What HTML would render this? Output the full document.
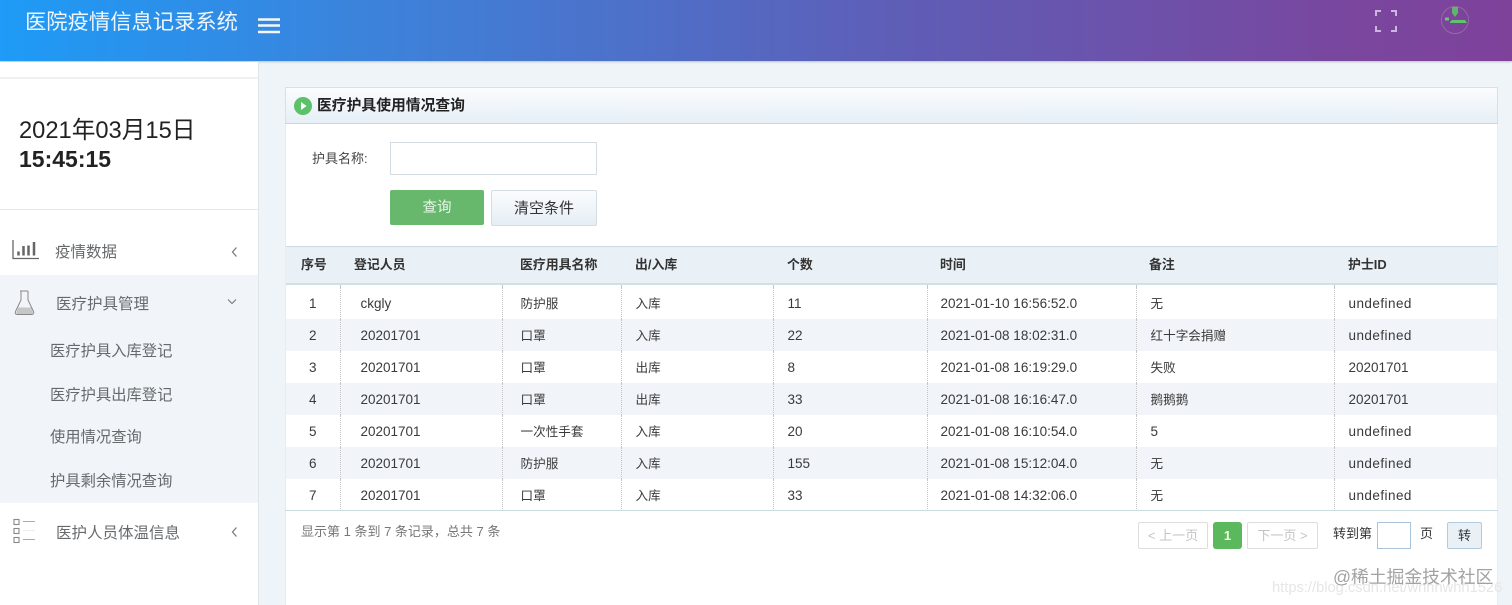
<!DOCTYPE html>
<html lang="zh-CN">
<head>
<meta charset="utf-8">
<title>医院疫情信息记录系统</title>
<style>
*{box-sizing:border-box}
html,body{margin:0;padding:0;width:1512px;height:605px;overflow:hidden;background:#eff4f8;font-family:"Liberation Sans","Noto Sans CJK SC",sans-serif;color:#333}
.a{position:absolute;white-space:nowrap}
#hd{left:0;top:0;width:1512px;height:61px;background:linear-gradient(90deg,#1e9bf6 0%,#3f80d8 27%,#5f5db6 60%,#7a469e 90%,#7e429b 100%);box-shadow:0 1px 2px rgba(0,0,0,.22)}
#sb{left:0;top:62px;width:259px;height:543px;background:#fff;border-right:1px solid #dfe5ea}
.menu{font-size:15.5px;color:#676a6c;line-height:20px}
.sub{font-size:15.3px;color:#676a6c;line-height:20px;left:50px}
th,td{padding:0;font-weight:normal}
#tb{position:absolute;left:286px;top:246px;width:1211px;border-collapse:collapse;table-layout:fixed;font-size:13.5px}
#tb th{height:37px;padding-bottom:2px;font-weight:bold;font-size:12.9px;text-align:left;background:#eaf1f6;border-top:1px solid #c9dae5;border-bottom:2px solid #d3dfe7;color:#333}
#tb td{height:32px;padding-top:1px;color:#3a3a3a;border-left:1px dotted #c4c4c4;padding-left:14px}
#tb td:first-child{border-left:none;text-align:center;padding-left:0}
#tb td:nth-child(2){padding-left:20px}
#tb td:nth-child(3){padding-left:18px}
#tb td:nth-child(6){padding-left:13px}
#tb td.u{letter-spacing:.45px}
#tb td.c{font-size:12.6px;padding-top:0}
#tb tr.e td{background:#f1f5f9}
#tb .spacer td{height:3px;padding:0}
.btn{font-size:13px;text-align:center;border-radius:2px}
</style>
</head>
<body>
<div id="hd" class="a"></div>
<div class="a" style="left:25px;top:7px;font-size:21.3px;line-height:30px;color:#eef6fd">医院疫情信息记录系统</div>
<svg class="a" style="left:258px;top:17px" width="22" height="18" viewBox="0 0 22 18"><path d="M0 2.500h22M0 8.500h22M0 15h22" stroke="#f4f8fc" stroke-width="2.400" fill="none"/></svg>
<svg class="a" style="left:1375px;top:10px" width="22" height="22" viewBox="0 0 22 22" fill="none" stroke="#cdb6de" stroke-width="2"><path d="M1 6V1h5M16 1h5v5M21 16v5h-5M6 21H1v-5"/></svg>
<svg class="a" style="left:1440px;top:4px" width="30" height="32" viewBox="0 0 30 32" fill="none"><circle cx="15" cy="16" r="13.500" stroke="#96749f" stroke-width=".8"/><path d="M12 3h6v6l-3 4-3-4z" fill="#5fb56a"/><path d="M10 18l2-2h13l2 3H10z" fill="#5fc46a"/><rect x="5" y="13.500" width="4" height="3" fill="#6cc477"/></svg>

<div id="sb" class="a"></div>
<div class="a" style="left:0;top:77px;width:258px;height:2px;background:#f0f0f0"></div>
<div class="a" style="left:19px;top:117px;font-size:23.700px;line-height:29px;color:#222">2021年03月15日</div>
<div class="a" style="left:19px;top:145px;font-size:23px;line-height:29px;font-weight:bold;color:#222">15:45:15</div>
<div class="a" style="left:0;top:209px;width:258px;height:1px;background:#e8e8e8"></div>
<div class="a" style="left:0;top:275px;width:258px;height:228px;background:#f1f5f9"></div>

<svg class="a" style="left:12px;top:239px" width="28" height="22" viewBox="0 0 28 22" fill="none" stroke="#666"><path d="M1 1v18.500h26" stroke-width="1.300"/><path d="M6.500 16.500v-4M11.500 16.500V7M16.500 16.500V6.500M22 16.500V3" stroke-width="2.500"/></svg>
<div class="a menu" style="left:55px;top:243px">疫情数据</div>
<svg class="a" style="left:230px;top:246px" width="8" height="11" viewBox="0 0 8 11" fill="none" stroke="#777" stroke-width="1.200"><path d="M6.500 1.500L2.500 6 6.500 10.500"/></svg>

<svg class="a" style="left:14px;top:290px" width="21" height="26" viewBox="0 0 21 26" fill="none" stroke="#888" stroke-width="1"><path d="M6 1h8M7 1v9L1.500 21.500q-1 3 2 3h14q3 0 2-3L14 10V1"/><path d="M4 17.500h13l2.500 6.500H2z" fill="#c4c6c8" stroke="none"/></svg>
<div class="a menu" style="left:56px;top:295px">医疗护具管理</div>
<svg class="a" style="left:227px;top:298px" width="10" height="7" viewBox="0 0 10 7" fill="none" stroke="#777" stroke-width="1.100"><path d="M1 1.500l4 4 4-4"/></svg>
<div class="a sub" style="top:342px">医疗护具入库登记</div>
<div class="a sub" style="top:386px">医疗护具出库登记</div>
<div class="a sub" style="top:428px">使用情况查询</div>
<div class="a sub" style="top:472px">护具剩余情况查询</div>

<svg class="a" style="left:13px;top:518px" width="24" height="26" viewBox="0 0 24 26" fill="none" stroke="#888" stroke-width="1.100"><rect x="1" y="1.500" width="5" height="5"/><rect x="1" y="10.500" width="5" height="5"/><rect x="1" y="19.500" width="5" height="5"/><path d="M10 3.500h12M10 21.500h12" stroke="#aaa"/><path d="M10 12.500h12" stroke="#eee"/></svg>
<div class="a menu" style="left:56px;top:524px">医护人员体温信息</div>
<svg class="a" style="left:230px;top:526px" width="8" height="11" viewBox="0 0 8 11" fill="none" stroke="#777" stroke-width="1.200"><path d="M6.500 1.500L2.500 6 6.500 10.500"/></svg>

<div class="a" style="left:285px;top:87px;width:1213px;height:518px;background:#fff;border-left:1px solid #e6edf2;border-right:1px solid #e6edf2"></div>
<div class="a" style="left:285px;top:87px;width:1213px;height:37px;background:linear-gradient(180deg,#fbfcfe 0%,#e6eff6 100%);border:1px solid #d3e1ea;border-bottom-color:#c5d8e4"></div>
<svg class="a" style="left:294px;top:97px" width="18" height="18" viewBox="0 0 18 18"><circle cx="9" cy="9" r="9" fill="#5cc168"/><path d="M7 5l5.500 4L7 13z" fill="#fff"/></svg>
<div class="a" style="left:317px;top:96px;font-size:14.800px;line-height:20px;font-weight:bold;color:#222">医疗护具使用情况查询</div>

<div class="a" style="left:312px;top:150px;font-size:13px;line-height:18px;color:#444">护具名称:</div>
<div class="a" style="left:390px;top:142px;width:207px;height:33px;border:1px solid #d5dde3;background:#fff"></div>
<div class="a btn" style="left:390px;top:190px;width:94px;height:35px;line-height:36px;background:#67b86d;color:#e9f6ea;font-size:14.500px">查询</div>
<div class="a btn" style="left:491px;top:190px;width:106px;height:36px;line-height:35px;background:linear-gradient(180deg,#fbfcfd,#e5eef5);border:1px solid #d3dde5;color:#333;font-size:15px">清空条件</div>

<table id="tb">
<colgroup><col style="width:54px"><col style="width:162px"><col style="width:119px"><col style="width:152px"><col style="width:154px"><col style="width:209px"><col style="width:198px"><col style="width:163px"></colgroup>
<tr><th style="padding-left:15px">序号</th><th style="padding-left:14px">登记人员</th><th style="padding-left:18px">医疗用具名称</th><th style="padding-left:14px">出/入库</th><th style="padding-left:14px">个数</th><th style="padding-left:13px">时间</th><th style="padding-left:13px">备注</th><th style="padding-left:14px">护士ID</th></tr>
<tr class="spacer"><td></td><td></td><td></td><td></td><td></td><td></td><td></td><td></td></tr>
<tr><td>1</td><td>ckgly</td><td class="c">防护服</td><td class="c">入库</td><td>11</td><td>2021-01-10 16:56:52.0</td><td class="c">无</td><td class="u">undefined</td></tr>
<tr class="e"><td>2</td><td>20201701</td><td class="c">口罩</td><td class="c">入库</td><td>22</td><td>2021-01-08 18:02:31.0</td><td class="c">红十字会捐赠</td><td class="u">undefined</td></tr>
<tr><td>3</td><td>20201701</td><td class="c">口罩</td><td class="c">出库</td><td>8</td><td>2021-01-08 16:19:29.0</td><td class="c">失败</td><td>20201701</td></tr>
<tr class="e"><td>4</td><td>20201701</td><td class="c">口罩</td><td class="c">出库</td><td>33</td><td>2021-01-08 16:16:47.0</td><td class="c">鹅鹅鹅</td><td>20201701</td></tr>
<tr><td>5</td><td>20201701</td><td class="c">一次性手套</td><td class="c">入库</td><td>20</td><td>2021-01-08 16:10:54.0</td><td>5</td><td class="u">undefined</td></tr>
<tr class="e"><td>6</td><td>20201701</td><td class="c">防护服</td><td class="c">入库</td><td>155</td><td>2021-01-08 15:12:04.0</td><td class="c">无</td><td class="u">undefined</td></tr>
<tr><td>7</td><td>20201701</td><td class="c">口罩</td><td class="c">入库</td><td>33</td><td>2021-01-08 14:32:06.0</td><td class="c">无</td><td class="u">undefined</td></tr>
</table>
<div class="a" style="left:285px;top:510px;width:1213px;height:1px;background:#c9dbe0"></div>

<div class="a" style="left:301px;top:522px;font-size:13px;line-height:20px;color:#777">显示第 1 条到 7 条记录，总共 7 条</div>
<div class="a btn" style="left:1138px;top:522px;width:70px;height:27px;line-height:25px;border:1px solid #ddd;color:#c4c4c4">&lt; 上一页</div>
<div class="a btn" style="left:1213px;top:522px;width:29px;height:27px;line-height:27px;background:#5cb85c;color:#f3fbe8;font-weight:bold;border-radius:3px">1</div>
<div class="a btn" style="left:1247px;top:522px;width:71px;height:27px;line-height:25px;border:1px solid #ddd;color:#c4c4c4">下一页 &gt;</div>
<div class="a" style="left:1333px;top:524px;font-size:13px;line-height:20px;color:#333">转到第</div>
<div class="a" style="left:1377px;top:522px;width:34px;height:27px;border:1px solid #a9c3dc;background:#fff"></div>
<div class="a" style="left:1420px;top:524px;font-size:13px;line-height:20px;color:#333">页</div>
<div class="a btn" style="left:1447px;top:522px;width:35px;height:27px;line-height:25px;background:#e9f1f7;border:1px solid #b3cbe0;color:#333">转</div>

<div class="a" style="left:1272px;top:577px;font-size:14.700px;line-height:22px;color:#e6e6e6">https://blog.csdn.net/whhhwhh1526</div>
<div class="a" style="left:1333px;top:564px;font-size:17.800px;line-height:26px;color:#a2a2a2;text-shadow:0 0 1px #fff">@稀土掘金技术社区</div>
</body>
</html>
